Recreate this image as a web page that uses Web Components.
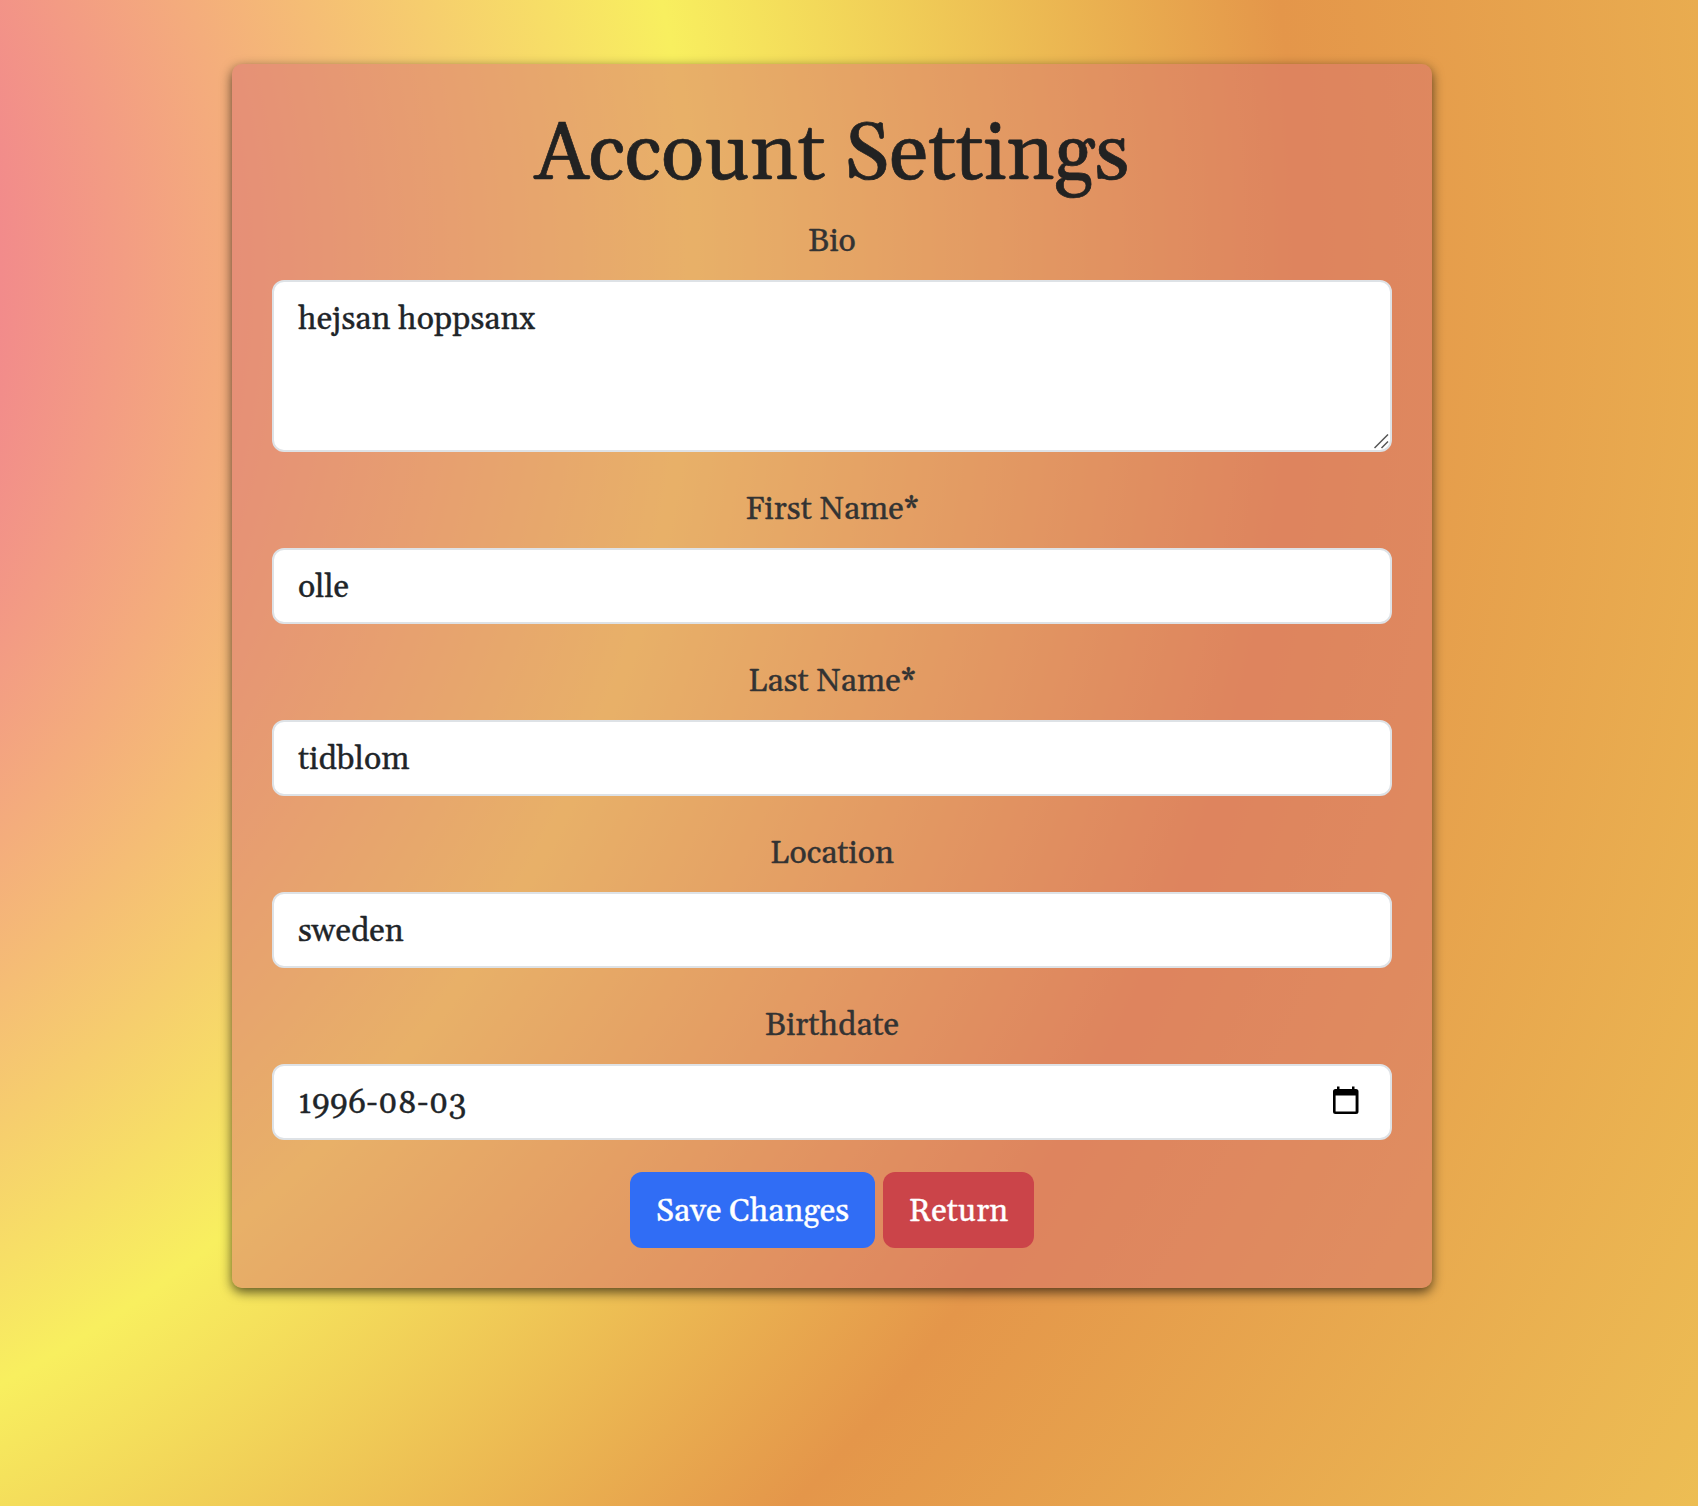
<!DOCTYPE html>
<html lang="en"><head><meta charset="utf-8"><title>Account Settings</title>
<style>
html,body{margin:0;height:100%}
body{font-family:Georgia,Gelasio,"Liberation Serif",serif;font-size:32px;line-height:48px;color:#212529;-webkit-text-stroke:.35px currentColor}
</style></head><body>
<settings-page>
<settings-card heading="Account Settings">
<form-field label="Bio" kind="area">hejsan hoppsanx</form-field>
<form-field label="First Name*">olle</form-field>
<form-field label="Last Name*">tidblom</form-field>
<form-field label="Location">sweden</form-field>
<form-field label="Birthdate" kind="date">1996-08-03</form-field>
<action-button slot="actions" style="--bg:#306df5;--w:245px">Save Changes</action-button>
<action-button slot="actions" style="--bg:#cb4449;--w:151px">Return</action-button>
</settings-card>
</settings-page>
<script>
class Base extends HTMLElement{constructor(){super();this.attachShadow({mode:'open'});}
connectedCallback(){this.shadowRoot.innerHTML=this.view();}}
customElements.define('settings-page',class extends Base{view(){return `<style>
:host{display:flex;justify-content:center;align-items:flex-start;box-sizing:border-box;height:1506px;padding:64px 34px 0 0;overflow:hidden;
background:radial-gradient(2800px 2605px at -690px 270px,#f28b8b 0,#f28b8b 690px,#f8ef5f 1382px,#e4964a 1990px,#edbf54 2760px)}
</style><slot></slot>`}});
customElements.define('settings-card',class extends Base{view(){return `<style>
:host{display:block;box-sizing:border-box;width:1200px;height:1224px;padding:40px;border-radius:10px;background:rgba(216,114,114,.5);box-shadow:0 4px 12px rgba(0,0,0,.65)}
h1{box-sizing:border-box;margin:0;height:96px;padding-top:4px;line-height:96px;font-size:80px;font-weight:400;text-align:center;color:#222;white-space:nowrap;-webkit-text-stroke:.7px currentColor}
.actions{display:flex;justify-content:center;gap:8px;margin-top:32px}
.fields{display:flex;flex-direction:column;gap:32px;padding-top:16px}
</style><h1>${this.getAttribute('heading')}</h1><div class="fields"><slot></slot></div><div class="actions"><slot name="actions"></slot></div>`}});
customElements.define('form-field',class extends Base{view(){const k=this.getAttribute('kind');return `<style>
:host{display:flex;flex-direction:column;gap:16px}
.label{box-sizing:border-box;height:48px;padding-top:2px;text-align:center;color:#333}
.box{display:flex;justify-content:space-between;box-sizing:border-box;height:76px;padding:14px 22px 8px 24px;border:2px solid #dee2e6;border-radius:12px;background:#fff}
.area{height:172px;padding-right:0;padding-bottom:0}
.grip{align-self:flex-end;width:16px;height:16px}
.cal{width:40px;height:40px;margin-top:4px}
</style><div class="label">${this.getAttribute('label')}</div><div class="box ${k||''}"><span><slot></slot></span>${
k==='area'?'<svg class="grip" viewBox="0 0 16 16" fill="none" stroke="#555" stroke-width="1.5"><path d="M.5 14L14 .5M7.500 14L14 7.500"/></svg>':
k==='date'?'<svg class="cal" viewBox="0 0 40 40"><path fill-rule="evenodd" d="M9 5V2.500h2.500V5h12.500V2.500h2.500V5h1.500q2.500 0 2.500 2.500v20q0 2.500-2.500 2.500h-20.500q-2.500 0-2.500-2.500v-20Q5 5 7.500 5zM7.600 11.500v16h20v-16z"/></svg>':''}</div>`}});
customElements.define('action-button',class extends Base{view(){return `<style>
:host{display:block}
button{display:block;width:var(--w);height:76px;padding:3px 0 0;border:0;border-radius:12px;background:var(--bg);color:#fff;font:inherit;white-space:nowrap}
</style><button type="button"><slot></slot></button>`}});
</script></body></html>
